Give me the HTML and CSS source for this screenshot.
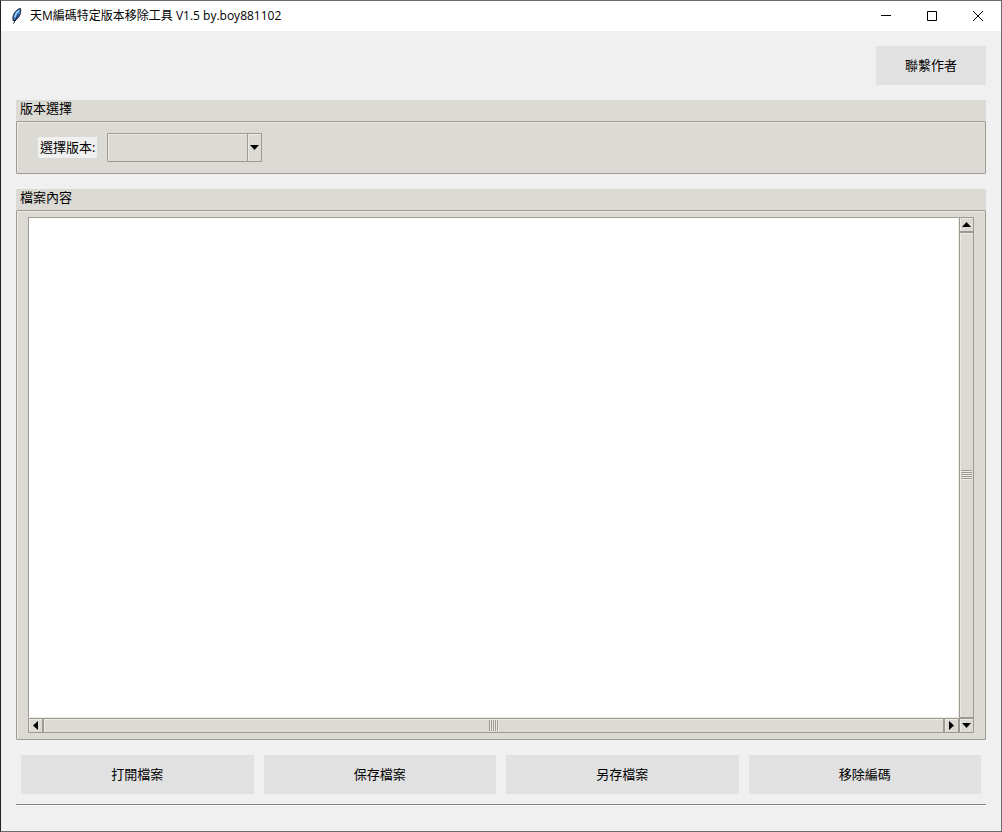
FILE: index.html
```html
<!DOCTYPE html>
<html lang="zh-Hant">
<head>
<meta charset="UTF-8">
<meta name="viewport" content="width=device-width, initial-scale=1.0">
<title>天M編碼特定版本移除工具 V1.5 by.boy881102</title>
<link rel="stylesheet" href="styles.css">
</head>
<body>
<header class="titlebar">
  <svg class="feather" width="12" height="16" viewBox="0 0 12 16" aria-hidden="true">
    <path d="M9.5 0.5 C6 1 2.5 5 2 9 L2 12.5 L4 12.5 C7.5 10.5 10.5 6 9.5 0.5 Z" fill="#3f86d8" stroke="#151a26" stroke-width="1"/>
    <path d="M8 2.5 C6 4 4.5 6.5 4 9" fill="none" stroke="#a9d0f7" stroke-width="1.5"/>
    <path d="M7.5 6 L2.5 15.5" stroke="#151a26" stroke-width="1"/>
  </svg>
  <h1>天M編碼特定版本移除工具 V1.5 by.boy881102</h1>
  <button class="win-btn" aria-label="最小化"><svg width="10" height="10" viewBox="0 0 10 10"><path d="M0 4.5H10" stroke="#000"/></svg></button>
  <button class="win-btn" aria-label="最大化"><svg width="10" height="10" viewBox="0 0 10 10"><path d="M0.5 0.5H9.5V9.5H0.5Z" fill="none" stroke="#000"/></svg></button>
  <button class="win-btn" aria-label="關閉"><svg width="10" height="10" viewBox="0 0 10 10"><path d="M0 0L10 10M10 0L0 10" stroke="#000"/></svg></button>
</header>
<main>
  <button class="btn contact">聯繫作者</button>

  <section class="group">
    <h2>版本選擇</h2>
    <div class="box version-row">
      <label for="version">選擇版本:</label>
      <div class="combo">
        <select id="version"><option value=""></option></select>
        <span class="combo-arrow"><svg width="9" height="5" viewBox="0 0 9 5"><path d="M0 0H9L4.5 5Z"/></svg></span>
      </div>
    </div>
  </section>

  <section class="group file-group">
    <h2><label for="content">檔案內容</label></h2>
    <div class="box editor">
      <textarea id="content" wrap="off"></textarea>
      <div class="scroll vertical">
        <button class="scroll-btn" aria-label="向上"><svg width="9" height="5" viewBox="0 0 9 5"><path d="M0 5H9L4.5 0Z"/></svg></button>
        <div class="thumb"><span class="grip"></span></div>
        <button class="scroll-btn" aria-label="向下"><svg width="9" height="5" viewBox="0 0 9 5"><path d="M0 0H9L4.5 5Z"/></svg></button>
      </div>
      <div class="scroll horizontal">
        <button class="scroll-btn" aria-label="向左"><svg width="5" height="9" viewBox="0 0 5 9"><path d="M5 0V9L0 4.5Z"/></svg></button>
        <div class="thumb"><span class="grip"></span></div>
        <button class="scroll-btn" aria-label="向右"><svg width="5" height="9" viewBox="0 0 5 9"><path d="M0 0V9L5 4.5Z"/></svg></button>
      </div>
    </div>
  </section>

  <div class="actions">
    <button class="btn">打開檔案</button>
    <button class="btn">保存檔案</button>
    <button class="btn">另存檔案</button>
    <button class="btn">移除編碼</button>
  </div>
</main>
<footer class="status"></footer>
</body>
</html>
```
FILE: styles.css
```css
* {
  box-sizing: border-box;
}
body {
  margin: 0;
  min-height: 100vh;
  display: flex;
  flex-direction: column;
  background-color: #f0f0f0;
  border: 1px solid #6b6b6b;
  border-left-color: #242024;
  color: #000;
  font-family: "Open Sans", "Noto Sans CJK TC", sans-serif;
  font-size: 13px;
  line-height: 18px;
}
button, select, textarea {
  margin: 0;
  padding: 0;
  border: none;
  border-radius: 0;
  font: inherit;
  color: inherit;
}

/* title bar */
.titlebar {
  display: flex;
  height: 30px;
  align-items: center;
  background-color: #fff;
}
.feather {
  margin: 0 7px 0 10px;
}
h1 {
  flex: 1;
  margin: 0;
  font-size: 12px;
  font-weight: normal;
}
.win-btn {
  display: flex;
  width: 46px;
  height: 30px;
  align-items: center;
  justify-content: center;
  background-color: #fff;
}
.win-btn:hover {
  background-color: #e5e5e5;
}

main {
  flex: 1;
  display: flex;
  flex-direction: column;
  gap: 15px;
  padding: 15px 15px 10px;
}
.btn {
  height: 39px;
  padding-bottom: 2px;
  background-color: #e1e1e1;
}
.btn:hover {
  background-color: #d6d6d6;
}
.contact {
  width: 110px;
  align-self: flex-end;
}

/* labelled frames */
.group h2 {
  height: 21px;
  margin: 0;
  padding: 0 4px;
  background-color: #dcdad5;
  font-size: 13px;
  font-weight: normal;
  line-height: 16px;
}
.box {
  border: 1px solid #9e9a91;
  border-radius: 1px;
  background-color: #dcdad5;
  box-shadow: inset 1px 1px #eeebe7;
}
.version-row {
  display: flex;
  align-items: center;
  gap: 10px;
  padding: 11px 21px;
}
.version-row label {
  padding: 1px 2px 2px;
  background-color: #f0f0f0;
}
.combo {
  display: grid;
  width: 155px;
  height: 29px;
}
.combo select {
  grid-area: 1 / 1;
  appearance: none;
  padding: 0 20px 0 4px;
  border: 1px solid #9e9a91;
  border-radius: 1px;
  background-color: #dcdad5;
  box-shadow: inset 1px 1px #eeebe7;
}
.combo-arrow {
  grid-area: 1 / 1;
  justify-self: end;
  display: flex;
  width: 15px;
  align-items: center;
  justify-content: center;
  border: 1px solid #9e9a91;
  box-shadow: inset 1px 1px #eeebe7;
  pointer-events: none;
}

/* text editor and its scrollbars */
.file-group {
  flex: 1;
  display: flex;
  flex-direction: column;
}
.editor {
  flex: 1;
  display: grid;
  grid-template-columns: 1fr 15px;
  grid-template-rows: 1fr 15px;
  padding: 6px 11px;
}
.editor textarea {
  width: 100%;
  height: 100%;
  resize: none;
  overflow: hidden;
  outline: none;
  border: 1px solid #9e9a91;
  border-right-color: #eeebe7;
  border-bottom-color: #eeebe7;
  background-color: #fff;
}
.scroll {
  display: flex;
}
.vertical {
  grid-row: 1 / 3;
  grid-column: 2;
  flex-direction: column;
}
.scroll-btn, .thumb {
  display: flex;
  align-items: center;
  justify-content: center;
  border: 1px solid #9e9a91;
  background-color: #dcdad5;
  box-shadow: inset 1px 1px #eeebe7;
}
.scroll-btn {
  width: 15px;
  height: 15px;
}
.thumb {
  flex: 1;
}
.vertical .grip {
  width: 11px;
  height: 10px;
  background: repeating-linear-gradient(#9e9a91 0 1px, #eeebe7 1px 2px);
}
.horizontal .grip {
  width: 10px;
  height: 11px;
  background: repeating-linear-gradient(90deg, #9e9a91 0 1px, #eeebe7 1px 2px);
}

.actions {
  display: grid;
  grid-template-columns: repeat(4, 1fr);
  gap: 10px;
  padding: 0 5px;
}
.status {
  height: 27px;
  margin: 0 15px;
  border-top: 1px solid #828282;
  box-shadow: inset 0 1px #fff;
}
```
